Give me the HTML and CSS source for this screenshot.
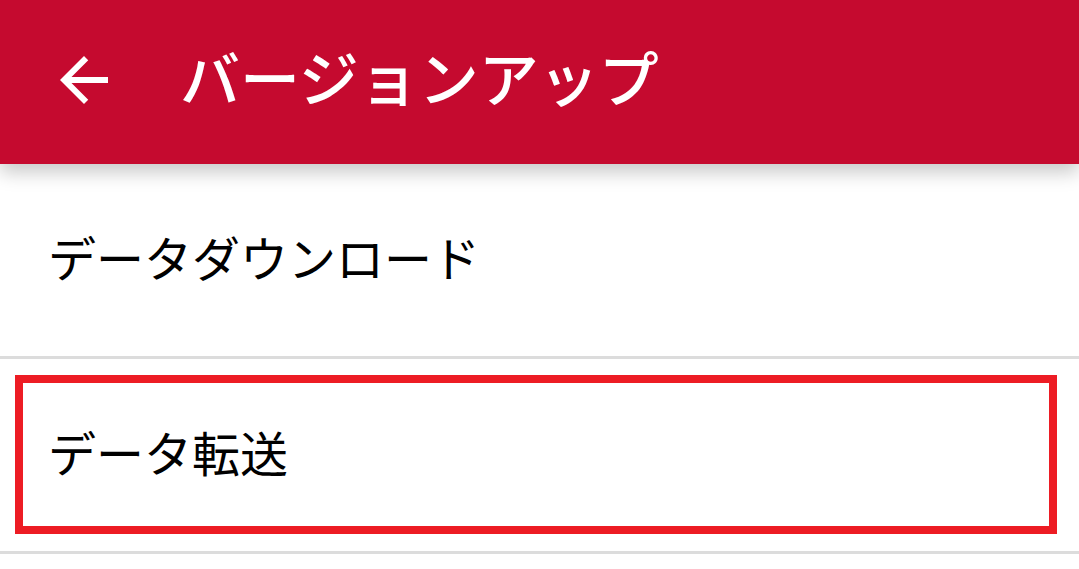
FILE: index.html
```html
<!DOCTYPE html>
<html lang="ja">
<head>
<meta charset="utf-8">
<title>バージョンアップ</title>
<link rel="stylesheet" href="styles.css">
</head>
<body>
<header class="appbar">
  <span class="back" aria-label="戻る">
    <svg viewBox="0 0 24 24" width="72" height="72"><path fill="#fff" d="M20 11H7.83l5.59-5.59L12 4l-8 8 8 8 1.41-1.41L7.83 13H20v-2z"/></svg>
  </span>
  <h1 class="title">バージョンアップ</h1>
</header>
<main class="list">
  <div class="item">データダウンロード</div>
  <div class="item item-marked">データ転送</div>
</main>
</body>
</html>
```
FILE: styles.css
```css
html, body {
  margin: 0;
  padding: 0;
  background: #ffffff;
}
body {
  font-family: "Noto Sans CJK JP", "Noto Sans", sans-serif;
}
.appbar {
  position: relative;
  z-index: 1;
  height: 164px;
  box-sizing: border-box;
  padding: 0 0 4px 48px;
  background: #c50a2f;
  display: flex;
  align-items: center;
  box-shadow: 0 8px 18px rgba(0, 0, 0, 0.22);
}
.back {
  display: flex;
  width: 72px;
  height: 72px;
}
.title {
  margin: 0 0 8px 60px;
  font-size: 60px;
  font-weight: 500;
  color: #ffffff;
  line-height: 1;
}
.list {
  display: flex;
  flex-direction: column;
}
.item {
  position: relative;
  height: 195px;
  box-sizing: border-box;
  display: flex;
  align-items: center;
  padding: 0 0 8px 48px;
  font-size: 48px;
  color: #000000;
  border-bottom: 3px solid #dcdcdc;
}
.item-marked::after {
  content: "";
  position: absolute;
  top: 16px;
  left: 15px;
  right: 22px;
  bottom: 17px;
  border: 8px solid #ed1c24;
}
```
